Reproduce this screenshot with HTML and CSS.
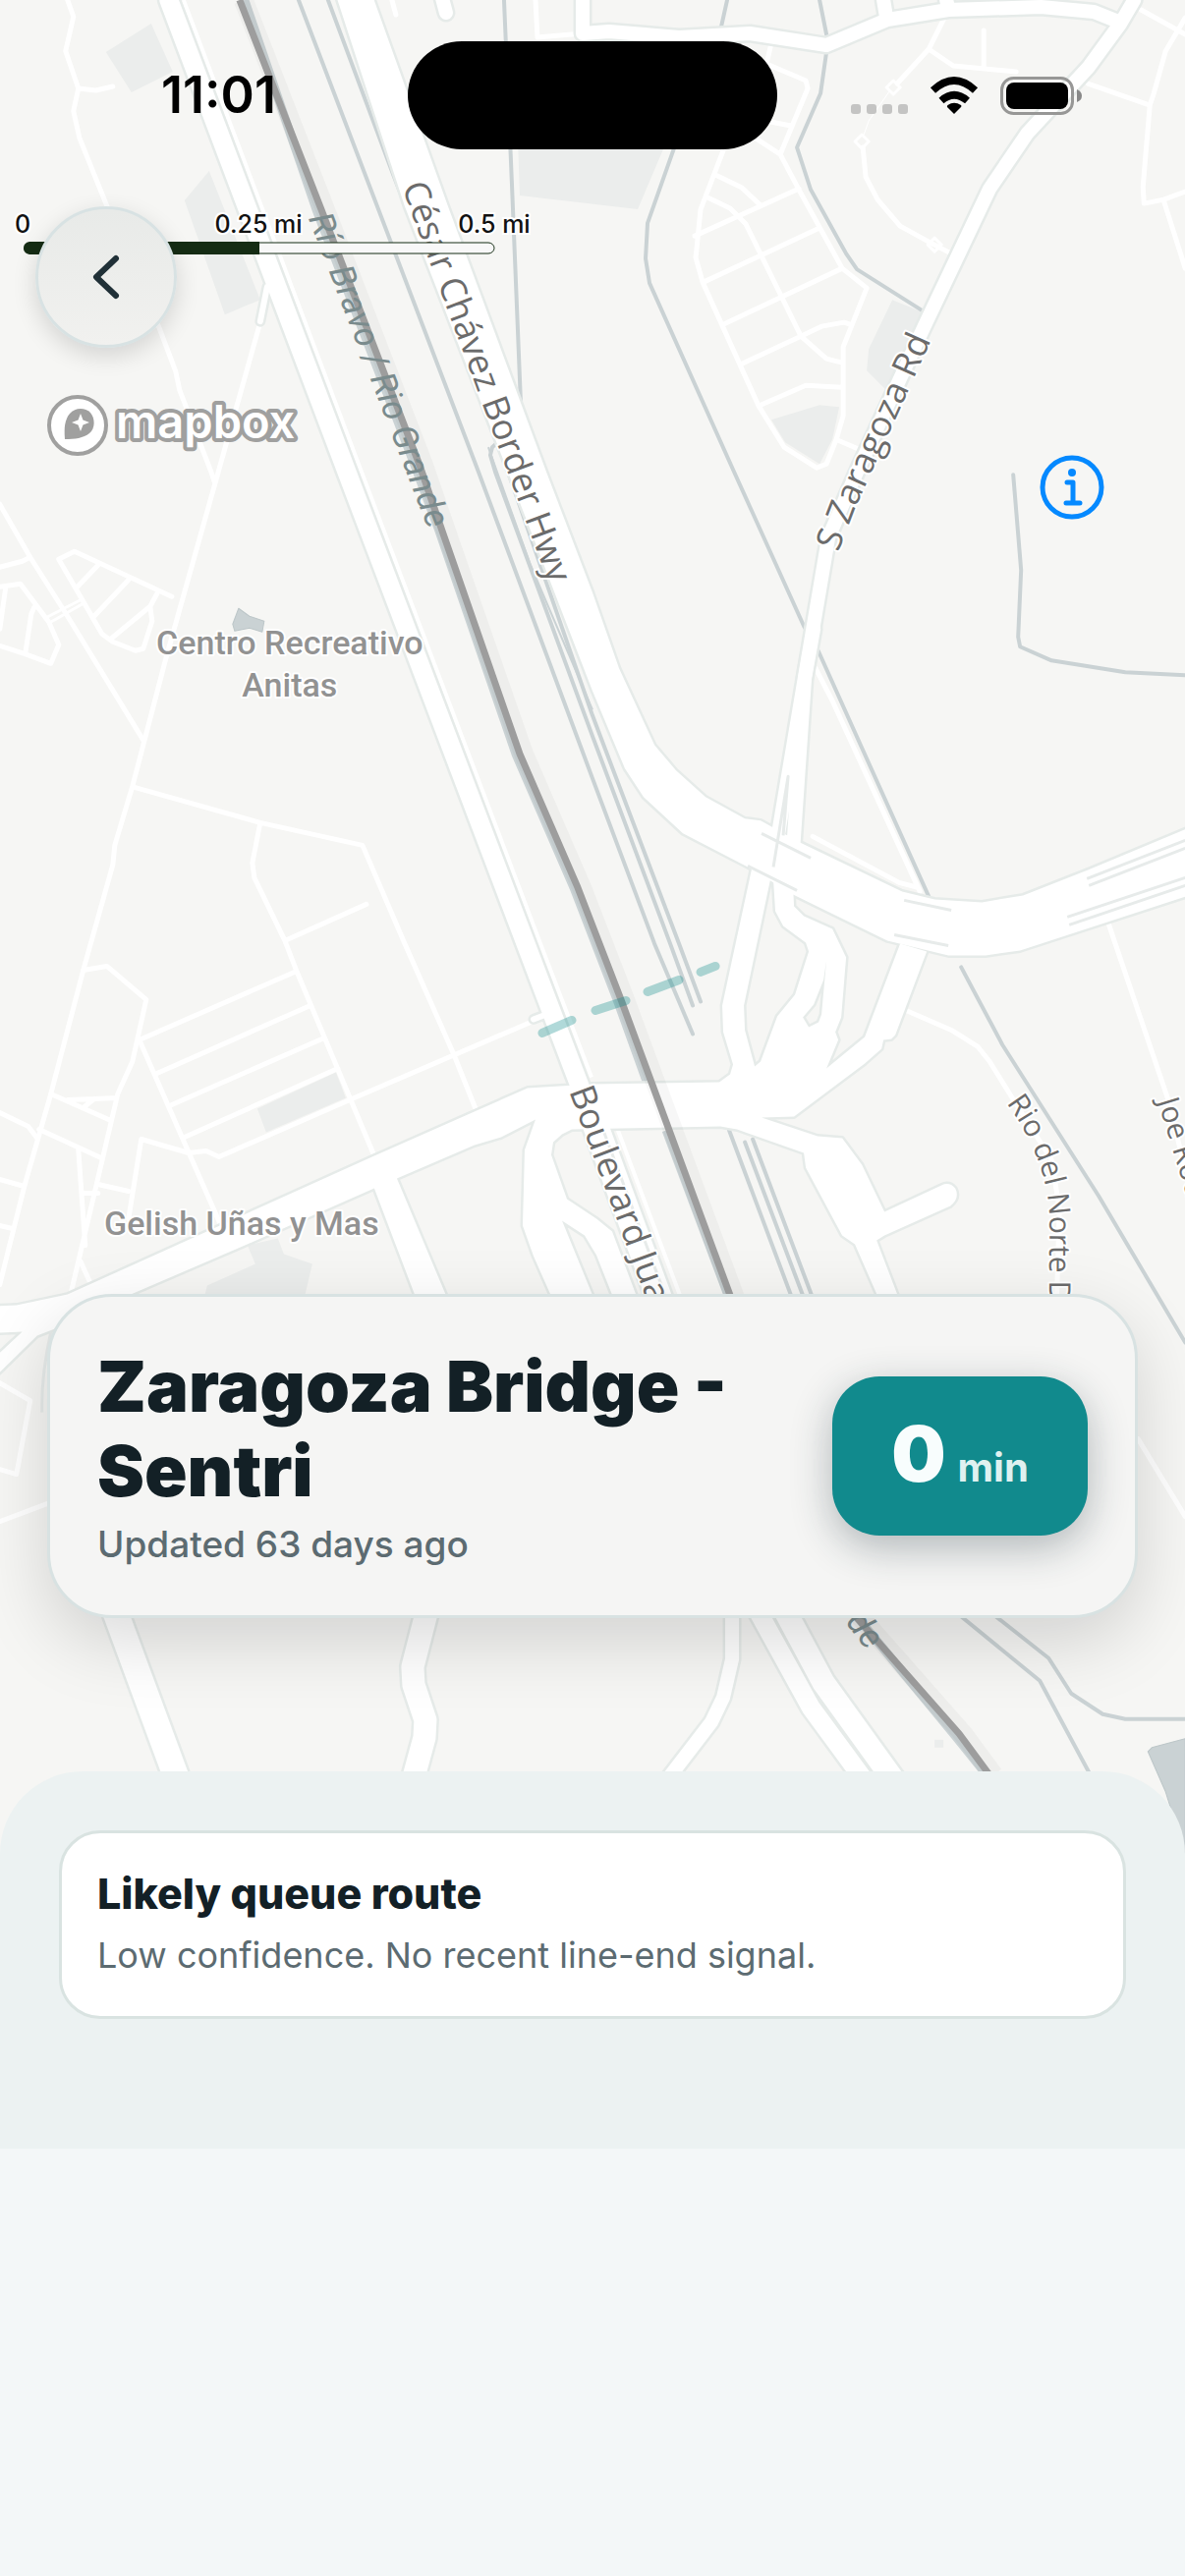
FILE: index.html
```html
<!DOCTYPE html>
<html lang="en">
<head>
<meta charset="utf-8">
<meta name="viewport" content="width=device-width, initial-scale=1">
<title>Zaragoza Bridge - Sentri</title>
<link rel="stylesheet" href="styles.css">
</head>
<body>
<main class="screen">
  <section class="hero">
    <svg class="map" viewBox="0 0 1206 1887" preserveAspectRatio="xMidYMin slice" role="img" aria-label="Map of the crossing">
      <defs>
        <g id="roads">
          <path class="r19" d="M172 0L353 480L535 960L590 1105"/>
          <path class="r26" d="M606 1145L678 1340"/>
          <path class="r14" d="M1154 0L1140 24L1107 69L1045 136L1007 192L940 333L872 480L843 547L826 647L790 860"/>
          <path class="r14" d="M828 640L819 690L806 880"/>
          <path class="r14" d="M593 0V34L620 32L691 38L763 34L841 46L903 20L965 10L1059 7L1113 12L1138 22M449 -6L454 13M899 0L902 18M963 0L965 8"/>
          <path class="r8" d="M272 292L265 327M543 1037L556 1032"/>
          <path class="area" d="M342 -5L412 210L517 480L603 703L636 782L655 811L695 848L761 882L807 910L903 957L965 972H1003L1038 967L1210 911V842L1107 885L1041 911L999 918L951 915L918 907L814 857L774 835L758 833L718 811L688 784L666 758L630 680L603 603L556 480L456 210L379 -5Z"/>
          <path class="area" fill-rule="evenodd" d="M768 870L735 1023L736 1050L746 1083L743 1093L732 1101L603 1103L537 1107L485 1130L381 1176L246 1237L69 1317L17 1328L-5 1329V1356L23 1355L-5 1381V1401L38 1359L56 1352L131 1318L254 1265L381 1209L427 1330H459L404 1199L483 1165L510 1157L545 1139L534 1170L532 1247L543 1278L566 1330H608L572 1242L595 1257L607 1277L628 1330H652L623 1253L607 1240L577 1220L561 1175L563 1162L572 1154L582 1149L733 1146L750 1149L818 1173L820 1188L857 1257L870 1266L898 1330H918L892 1262L900 1257L967 1227Q977 1219 972 1209Q966 1202 958 1206L900 1233L877 1185L857 1158L832 1156L775 1137L808 1136L880 1082L897 1067L899 1058L907 1057L911 1053L943 968L916 960L880 1055L841 1087L853 1058L850 1050L856 1035L861 974L847 945L818 932L808 922L806 880H786L789 927L797 942L820 959L823 968L809 1012L791 1034L774 1080L768 1085L758 1048L757 1023L787 880ZM841 977L838 997L828 1022L817 1035L823 1045L833 1040L836 1032Z"/>
          <path class="r26" d="M112 1625L181 1812"/>
          <path class="r24" d="M437 1630L420 1696L421 1714L433 1750L432 1768L420 1812"/>
          <path class="r14" d="M745 1630V1688L736 1727L724 1752L678 1812"/>
          <path class="r19" d="M765 1628L825 1737L880 1812"/>
          <path class="r24" d="M793 1628L838 1712L910 1812"/>
        </g>
      </defs>

      <g class="park">
        <path d="M108 53L154 24L176 73L134 94ZM188 204L213 174L265 305L229 320ZM527 140H680L649 213L529 199ZM785 427L834 412L854 414L847 447L834 472L799 450ZM908 305L940 318L903 398L882 377L884 355ZM262 1128L342 1091L352 1117L271 1152ZM252 1267L283 1260L289 1276L318 1286L310 1320H208L211 1308L260 1286Z"/>
        <path d="M951 1770h9v8h-9z"/>
      </g>

      <g class="street">
        <path d="M69 0L75 17L67 52L80 90L75 113L81 140L108 207L162 333L179 378L183 397L215 480L219 492M80 90L98 92L115 88M265 328L219 492L169 670L135 800L117 860L115 880L85 987L52 1113L25 1207L0 1307"/>
        <path d="M0 513L31 567L69 627L146 753M0 577L23 571L31 567M175 607L76 561L60 569L85 612L104 645L115 653L138 662L146 660L155 632L153 617L160 604M79 597L100 575M96 627L131 590M113 650L153 617"/>
        <path d="M0 597L21 594L50 633L60 656L52 675L25 665L0 657M6 598L0 640M35 618L32 625L26 665"/>
        <path class="fine" d="M48 628L83 610M50 634L85 614"/>
        <path d="M137 801L265 837L369 860L412 960L462 1073L484 1128M265 837L257 878L259 893L290 957L302 988L331 1057L381 1176M290 957L373 920M302 988L142 1058M316 1023L160 1092M330 1056L175 1124M344 1087L188 1157M142 1058L192 1172L225 1247M540 1040L356 1119L223 1177L210 1171L192 1173L144 1159L131 1240"/>
        <path d="M85 987L109 983L149 1017L135 1080L120 1113L98 1207L73 1313M52 1113L113 1140M69 1119L96 1118L119 1117M85 1127L96 1118M40 1149L103 1178M0 1132L29 1146L38 1158M80 1170L87 1267M100 1205L131 1212M84 1214H100M0 1200L25 1207M0 1247L13 1250M82 1283L92 1305M0 1407L31 1425L17 1500L0 1495M0 1548L48 1530M1158 1464L1206 1543"/>
        <path d="M399 0L403 15M545 0L547 38L593 34"/>
        <path d="M961 18L945 50L913 85M878 150L881 180L893 203L916 230L947 247L966 257M945 50L970 67L1034 73M1001 31V70"/>
        <path class="hair" d="M905 93L884 123L879 137"/>
        <path class="fine" d="M909 82L916 89L909 96L902 89ZM877 137L884 144L877 151L870 144ZM951 242L958 249L951 256L944 249Z"/>
        <path d="M784 48L780 65L820 82L822 90L794 157L765 138M784 124L805 128M794 157L813 193L857 273L882 293L858 353V423L851 447L841 472L831 476L798 455L772 413L715 287L708 262L713 213L736 153M728 178L755 191L773 208M718 200L743 212L759 228L815 342L841 365L857 369M707 240L813 192M716 287L834 232M736 330L857 273M755 370L815 342L836 332L859 328L865 330M774 412L820 392L857 394M853 448L874 457"/>
        <path d="M1161 10L1206 35M1206 18L1186 52L1174 95L1170 107L1107 85M1170 107L1163 190L1164 207L1184 203L1206 195M1184 204L1206 273"/>
        <path d="M827 851L915 898L934 903M830 680L847 713L936 907M922 1028L968 1048L995 1065L1007 1080L1030 1117L1070 1180L1078 1230L1075 1330M1128 940L1188 1117L1206 1190"/>
      </g>

      <g class="water">
        <path d="M304 0L487 480L603 792L666 960L705 1052M334 0L400 177L517 480L603 728L691 960L713 1019M512 445L501 455L499 463L504 480L603 749L682 960L705 1023M742 1150L805 1318M758 1162L817 1318M766 1159L826 1318"/>
        <path d="M513 0L521 187L530 410M740 0L734 27M834 0L841 35M841 53L835 95L811 150L825 193L861 258L872 274L940 317M688 145L659 227L657 263L661 288L747 480L818 637L833 663L945 912"/>
        <path d="M1031 483L1039 580L1036 648L1038 658L1070 672L1145 684L1206 687M978 984L1020 1063L1118 1217L1206 1366M970 1638L1058 1710L1109 1805M1005 1638L1067 1687L1090 1723L1122 1744L1145 1749H1206"/>
        <path class="river" d="M249 0L322 213L422 473L447 540L525 767L584 903L628 1017L658 1100M678 1150L741 1318M868 1640L972 1766L1004 1806"/>
        <path class="pond" d="M243 619L254 627L269 632L267 643L254 639L239 642L237 635ZM1168 1782L1172 1778L1206 1769V1887L1186 1823Z"/>
      </g>

      <path class="edge" d="M187 0L368 480L550 960L602 1096M627 1145L692 1318"/>
      <use href="#roads" class="casing"/>
      <use href="#roads" class="surface"/>
      <path class="deck" d="M775 848L825 873M761 881L811 906M920 916L968 926M910 951L965 962M1106 894L1206 855M1108 901L1206 863M1086 933L1206 893M1088 941L1206 901M787 882L802 790L797 850M614 1150L677 1318M43 1437Q42 1400 52 1355"/>
      <path class="water-edge" d="M497 455L540 575L603 722"/>

      <path class="halo" d="M248 0L331 213L431 473L454 540L533 767L592 903L636 1017L747 1318L876 1646L980 1764L1011 1806"/>
      <path class="border" d="M244 0L327 213L427 473L450 540L529 767L588 903L632 1017L743 1318L872 1646L976 1764L1007 1806"/>

      <path class="queue" d="M552 1051L582 1038M606 1028L637 1018M659 1009L691 997M713 989L728 983"/>

      <g class="road-label">
        <path id="l1" d="M409 190L561 600"/><text><textPath href="#l1">César Chávez Border Hwy</textPath></text>
        <path id="l2" d="M853 562L869 520L957 325"/><text><textPath href="#l2">S Zaragoza Rd</textPath></text>
        <path id="l3" d="M579 1110L690 1408"/><text><textPath href="#l3">Boulevard Juan</textPath></text>
      </g>
      <g class="street-label">
        <path id="l4" d="M1024 1122Q1070 1185 1068 1250L1067 1420"/><text><textPath href="#l4">Rio del Norte Dr</textPath></text>
        <path id="l5" d="M1178 1120L1230 1290"/><text><textPath href="#l5">Joe Rod</textPath></text>
      </g>
      <g class="river-label">
        <path id="l6" d="M314 222L444 560"/><text><textPath href="#l6">Río Bravo / Rio Grande</textPath></text>
        <path id="l7" d="M860 1650L902 1706"/><text><textPath href="#l7">de</textPath></text>
      </g>
      <g class="poi-label">
        <text x="295" y="666">Centro Recreativo</text>
        <text x="295" y="709">Anitas</text>
        <text x="246" y="1256">Gelish Uñas y Mas</text>
      </g>
    </svg>

    <header class="status">
      <time class="clock">11:01</time>
      <span class="island"></span>
      <svg class="signals" viewBox="0 0 235 39" role="img" aria-label="Wi-Fi connected, battery full">
        <g fill="#c4c4c3"><rect y="28" width="10" height="10" rx="3"/><rect x="16" y="28" width="10" height="10" rx="3"/><rect x="32" y="28" width="10" height="10" rx="3"/><rect x="48" y="28" width="10" height="10" rx="3"/></g>
        <path d="M105 38L98 31Q97.500 30 98.500 29Q105 24.500 112 29Q113 30 112 31Z"/>
        <path d="M92 24.500Q105 13 118.500 24.500M83.500 14Q105 -6 126.500 14" fill="none" stroke="#000" stroke-width="7.500"/>
        <rect x="153.500" y="1.500" width="72" height="36" rx="12" fill="none" stroke="#979796" stroke-width="3"/>
        <rect x="158" y="6" width="63" height="27" rx="8"/>
        <path d="M230 13Q235 15 235 19.500Q235 24 230 26Z" fill="#888"/>
      </svg>
    </header>

    <svg class="scale" viewBox="0 0 560 54" role="img" aria-label="Map scale">
      <rect x="25" y="37" width="478" height="11" rx="6" fill="#f8f8f8" stroke="#152c14" stroke-width="1"/>
      <path d="M264 36V49H30Q24 48 24 42.500Q24 37 30 36Z" fill="#152c14"/>
      <text x="23" y="27">0</text><text x="263" y="27">0.25 mi</text><text x="503" y="27">0.5 mi</text>
    </svg>

    <button class="back" type="button" aria-label="Back">
      <svg viewBox="0 0 48 48"><path d="M34 5L14 24L34 43"/></svg>
    </button>

    <a class="logo" href="#mapbox" aria-label="Mapbox">
      <svg viewBox="0 0 260 70">
        <circle cx="33" cy="34" r="29" fill="#fff" stroke="#a0a09f" stroke-width="4"/>
        <path d="M20 48C19 36 20 28 25 22C31 15 41 16 46 21C51 27 51 37 45 42C39 47 30 48 20 48Z" fill="#a0a09f"/>
        <path d="M36 22L38.500 28.500L45 31L38.500 33.500L36 40L33.500 33.500L27 31L33.500 28.500Z" fill="#fff"/>
        <text x="72" y="47">mapbox</text>
      </svg>
    </a>

    <button class="info" type="button" aria-label="Map attribution">
      <svg viewBox="0 0 66 66"><circle cx="33" cy="33" r="30"/><path d="M28 28H34V49M27 49H41"/><circle class="dot" cx="33" cy="18" r="4"/></svg>
    </button>

    <article class="crossing">
      <div class="crossing-text">
        <h1>Zaragoza Bridge - Sentri</h1>
        <p>Updated 63 days ago</p>
      </div>
      <div class="wait"><strong>0</strong><span>min</span></div>
    </article>
  </section>

  <section class="sheet">
    <article class="route">
      <h2>Likely queue route</h2>
      <p>Low confidence. No recent line-end signal.</p>
    </article>
  </section>
</main>
</body>
</html>
```
FILE: styles.css
```css
* { box-sizing: border-box; }

body {
  margin: 0;
  background: #f3f7f8;
  color: #132026;
  font-family: Inter, "Liberation Sans", sans-serif;
}

h1, h2, p { margin: 0; }

button {
  padding: 0;
  border: 0;
  background: none;
  cursor: pointer;
}

/* Map and everything floating over it */
.hero {
  position: relative;
  display: flex;
  flex-direction: column;
  justify-content: space-between;
  min-height: 72vh;
  padding-bottom: 241px;
  overflow: hidden;
}

.map {
  position: absolute;
  inset: 0;
  width: 100%;
  height: 100%;
  background: #f6f6f4;
  fill: none;
  stroke-linejoin: round;
}

.park { fill: #ebedec; }
.street { stroke: #fff; stroke-width: 5px; stroke-linecap: round; }
.fine { stroke-width: 3px; }
.hair { stroke-width: 1px; }
.water { stroke: #cad2d4; stroke-width: 4px; stroke-linecap: round; }
.river { stroke-width: 9px; stroke-linecap: butt; }
.pond { fill: #cad2d4; stroke: #bcc6c8; stroke-width: 1px; }
.edge { stroke: #fff; stroke-width: 4px; }
.deck { stroke: #e7ebea; stroke-width: 3px; }
.water-edge { stroke: #cad2d4; stroke-width: 2px; }

.casing { --road: #e6ebe9; --rim: 5px; }
.surface { --road: #fff; --rim: 0px; }
.area { fill: var(--road); stroke: var(--road); stroke-width: var(--rim); }
.r8, .r14, .r19, .r24, .r26 { stroke: var(--road); stroke-linecap: round; }
.r8 { stroke-width: calc(6px + var(--rim)); }
.r14 { stroke-width: calc(14px + var(--rim)); }
.r19 { stroke-width: calc(19px + var(--rim)); }
.r24 { stroke-width: calc(23px + var(--rim)); }
.r26 { stroke-width: calc(26px + var(--rim)); }

.halo { stroke: rgba(0, 0, 0, 0.03); stroke-width: 20px; }
.border { stroke: #9d9d9d; stroke-width: 7px; }
.queue { stroke: rgba(16, 139, 141, 0.33); stroke-width: 9px; stroke-linecap: round; }

.map text {
  stroke: #fff;
  stroke-width: 4px;
  paint-order: stroke;
}
.road-label text { font: 36px "Open Sans", sans-serif; fill: #6b6b6b; }
.street-label text { font: 30px "Open Sans", sans-serif; fill: #6b6b6b; }
.river-label text { font: italic 35px Roboto, sans-serif; fill: #7a8b8d; }
.map .river-label text { stroke: none; }
.poi-label text { font: 500 34px Roboto, sans-serif; fill: #929292; text-anchor: middle; }

.status {
  position: relative;
  display: grid;
  grid-template-columns: 1fr 376px 1fr;
  align-items: center;
  justify-items: center;
  padding: 42px 30px 0;
}
.clock { font-size: 52px; font-weight: 600; line-height: 60px; color: #000; }
.island { width: 376px; height: 110px; border-radius: 55px; background: #000; }
.signals { width: 235px; height: 39px; }

.scale { position: absolute; left: 0; top: 210px; width: 560px; height: 54px; }
.scale text {
  font-size: 25px;
  font-weight: 500;
  text-anchor: middle;
  fill: #111;
  stroke: #fff;
  stroke-width: 4px;
  paint-order: stroke;
}

.back {
  position: absolute;
  left: 36px;
  top: 210px;
  display: grid;
  place-items: center;
  width: 144px;
  height: 144px;
  border: 3px solid #d8e2e3;
  border-radius: 50%;
  background: linear-gradient(#e8eae8, #f1f1ef);
  box-shadow: 0 8px 24px rgba(0, 0, 0, 0.14);
}
.back svg {
  width: 48px;
  height: 48px;
  fill: none;
  stroke: #203037;
  stroke-width: 6;
  stroke-linecap: round;
  stroke-linejoin: round;
}

.logo { position: absolute; left: 46px; top: 399px; }
.logo svg { display: block; width: 260px; height: 70px; }
.logo text {
  font-size: 47px;
  font-weight: 600;
  fill: #fff;
  stroke: #a0a09f;
  stroke-width: 8px;
  stroke-linejoin: round;
  paint-order: stroke;
}

.info { position: absolute; right: 82px; top: 463px; width: 66px; height: 66px; }
.info svg { display: block; fill: none; stroke: #0589ff; stroke-width: 5; stroke-linecap: round; stroke-linejoin: round; }
.info .dot { fill: #0589ff; stroke: none; }

/* Crossing summary */
.crossing {
  position: relative;
  display: flex;
  align-items: center;
  justify-content: space-between;
  gap: 48px;
  margin: 0 48px;
  padding: 48px;
  border: 3px solid #d8e2e2;
  border-radius: 66px;
  background: #f5f5f4;
  box-shadow: 0 24px 72px rgba(0, 0, 0, 0.15);
}
.crossing-text { flex: 1; }
.crossing h1 { font-size: 72px; font-weight: 900; line-height: 86px; }
.crossing p { margin-top: 8px; font-size: 37px; font-weight: 500; line-height: 48px; color: #5c6b71; }

.wait {
  display: flex;
  align-items: baseline;
  justify-content: center;
  gap: 12px;
  width: 260px;
  padding: 31px 0 21px;
  border-radius: 48px;
  background: #118a8d;
  box-shadow: 0 12px 42px rgba(30, 50, 60, 0.32);
  line-height: 96px;
}
.wait strong { font-size: 78px; font-weight: 900; color: #f8fdfd; }
.wait span { font-size: 40px; font-weight: 700; color: #dff1f0; }

/* Bottom sheet */
.sheet {
  position: relative;
  margin-top: -85px;
  padding: 60px 60px 132px;
  border-radius: 84px 84px 0 0;
  background: #ecf2f2;
}
.route {
  padding: 36px 36px 38px;
  border: 3px solid #d9e3e1;
  border-radius: 42px;
  background: #fff;
}
.route h2 { font-size: 43px; font-weight: 800; line-height: 50px; }
.route p { margin-top: 14px; font-size: 36px; line-height: 48px; color: #5c6b71; }
```
